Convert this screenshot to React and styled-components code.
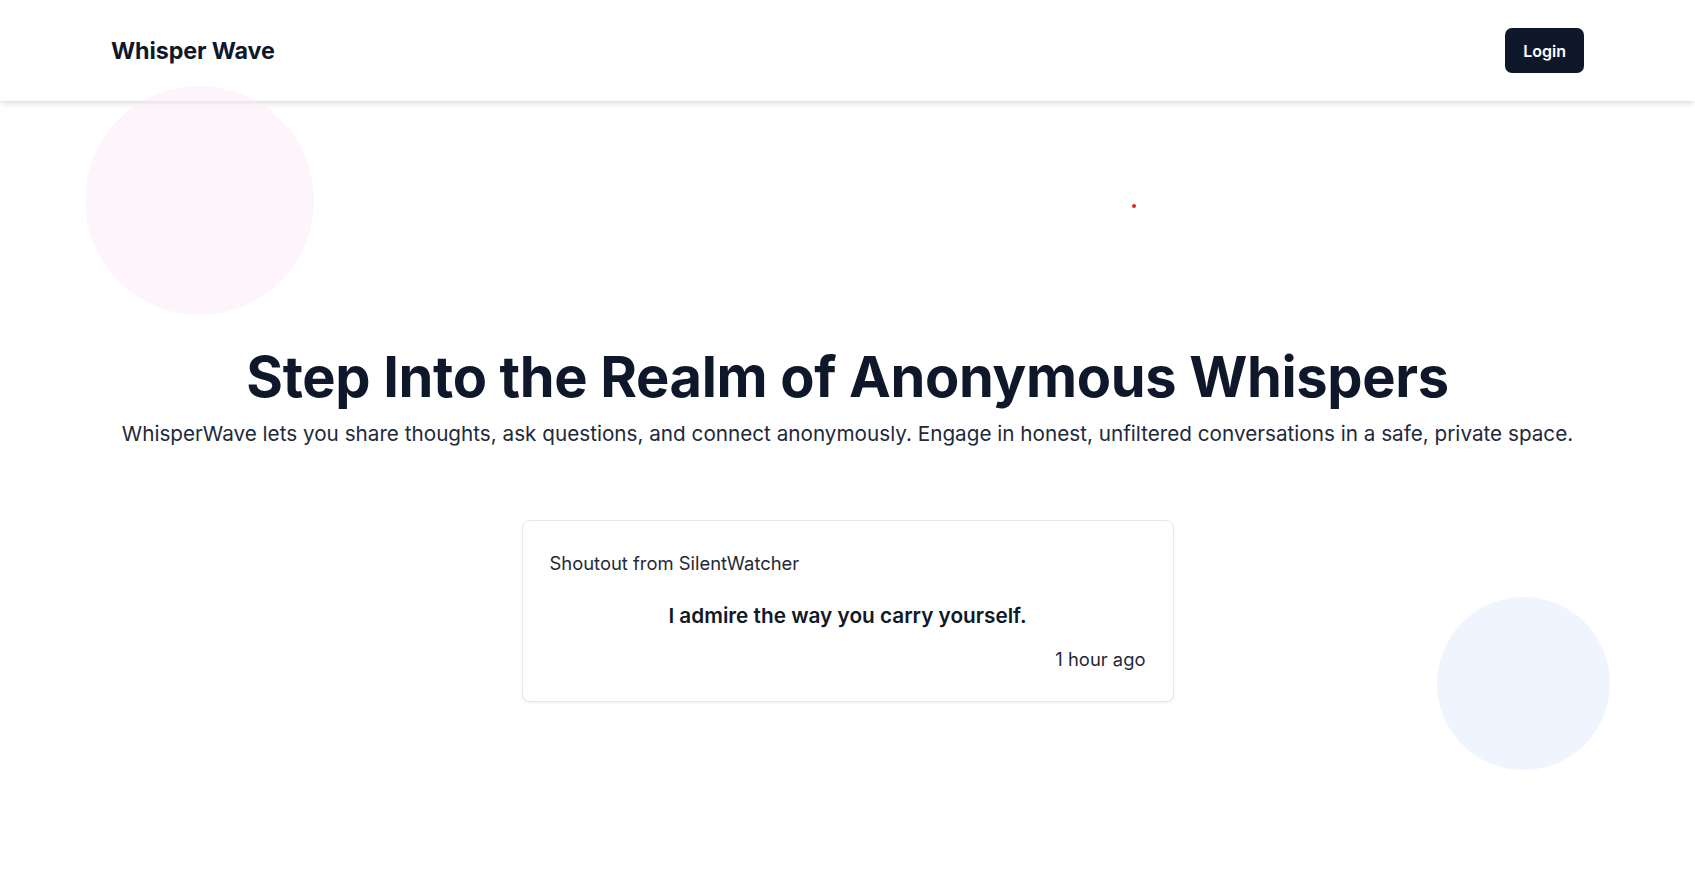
import React from "react";
import styled, { createGlobalStyle } from "styled-components";

const GlobalStyle = createGlobalStyle`
  * { box-sizing: border-box; }
  html, body { margin: 0; padding: 0; background: #ffffff; }
  body {
    font-family: Inter, "Noto Sans", "Liberation Sans", sans-serif;
    color: #0f172a;
    -webkit-font-smoothing: antialiased;
  }
`;

const Page = styled.div`
  position: relative;
  min-height: 886px;
  overflow: hidden;
  background: #ffffff;
`;

const Header = styled.header`
  position: relative;
  z-index: 1;
  height: 101px;
  padding: 0 111px;
  display: flex;
  align-items: center;
  justify-content: space-between;
  background: rgba(255, 255, 255, 0.96);
  box-shadow: 0 4px 6px -1px rgba(0, 0, 0, 0.1), 0 2px 4px -2px rgba(0, 0, 0, 0.08);
`;

const Logo = styled.div`
  font-size: 23.3px;
  line-height: 32px;
  font-weight: 700;
  color: #0f172a;
  letter-spacing: -0.1px;
`;

const LoginButton = styled.button`
  height: 45px;
  padding: 0 18px;
  border: none;
  border-radius: 7px;
  background: #0f172a;
  color: #ffffff;
  font-family: inherit;
  font-size: 16px;
  font-weight: 600;
  cursor: pointer;
`;

const Blob = styled.div`
  position: absolute;
  z-index: 2;
  border-radius: 50%;
  pointer-events: none;
  left: ${(p) => p.$left}px;
  top: ${(p) => p.$top}px;
  width: ${(p) => p.$size}px;
  height: ${(p) => p.$size}px;
  background: ${(p) => p.$color};
`;

const Dot = styled.div`
  position: absolute;
  left: 1132px;
  top: 204px;
  width: 4px;
  height: 4px;
  border-radius: 50%;
  background: #dc2626;
`;

const Hero = styled.main`
  position: relative;
  z-index: 3;
  display: flex;
  flex-direction: column;
  align-items: center;
  padding-top: 244px;
`;

const Title = styled.h1`
  margin: 0;
  font-size: 56px;
  line-height: 64px;
  font-weight: 700;
  color: #0f172a;
  letter-spacing: -0.35px;
  text-align: center;
`;

const Subtitle = styled.p`
  margin: 11px 0 0;
  font-size: 20.7px;
  line-height: 28px;
  color: #1e293b;
  text-align: center;
`;

const Card = styled.article`
  margin-top: 72px;
  width: 652px;
  border: 1px solid #e5e7eb;
  border-radius: 8px;
  background: #ffffff;
  box-shadow: 0 1px 3px rgba(0, 0, 0, 0.06);
  padding: 28px 27px 28px;
  display: flex;
  flex-direction: column;
`;

const CardTitle = styled.div`
  font-size: 18.4px;
  line-height: 28px;
  color: #1f2937;
`;

const Message = styled.div`
  margin-top: 25px;
  font-size: 20.75px;
  line-height: 28px;
  font-weight: 600;
  color: #111827;
  text-align: center;
`;

const Time = styled.div`
  margin-top: 15px;
  font-size: 18.4px;
  line-height: 28px;
  color: #1f2937;
  text-align: right;
`;

export default function App() {
  return (
    <Page>
      <GlobalStyle />
      <Header>
        <Logo>Whisper Wave</Logo>
        <LoginButton>Login</LoginButton>
      </Header>
      <Blob $left={85} $top={86} $size={229} $color="rgba(252, 231, 247, 0.45)" />
      <Blob $left={1437} $top={597} $size={173} $color="#eff5fe" />
      <Dot />
      <Hero>
        <Title>Step Into the Realm of Anonymous Whispers</Title>
        <Subtitle>
          WhisperWave lets you share thoughts, ask questions, and connect anonymously. Engage in honest, unfiltered conversations in a safe, private space.
        </Subtitle>
        <Card>
          <CardTitle>Shoutout from SilentWatcher</CardTitle>
          <Message>I admire the way you carry yourself.</Message>
          <Time>1 hour ago</Time>
        </Card>
      </Hero>
    </Page>
  );
}
